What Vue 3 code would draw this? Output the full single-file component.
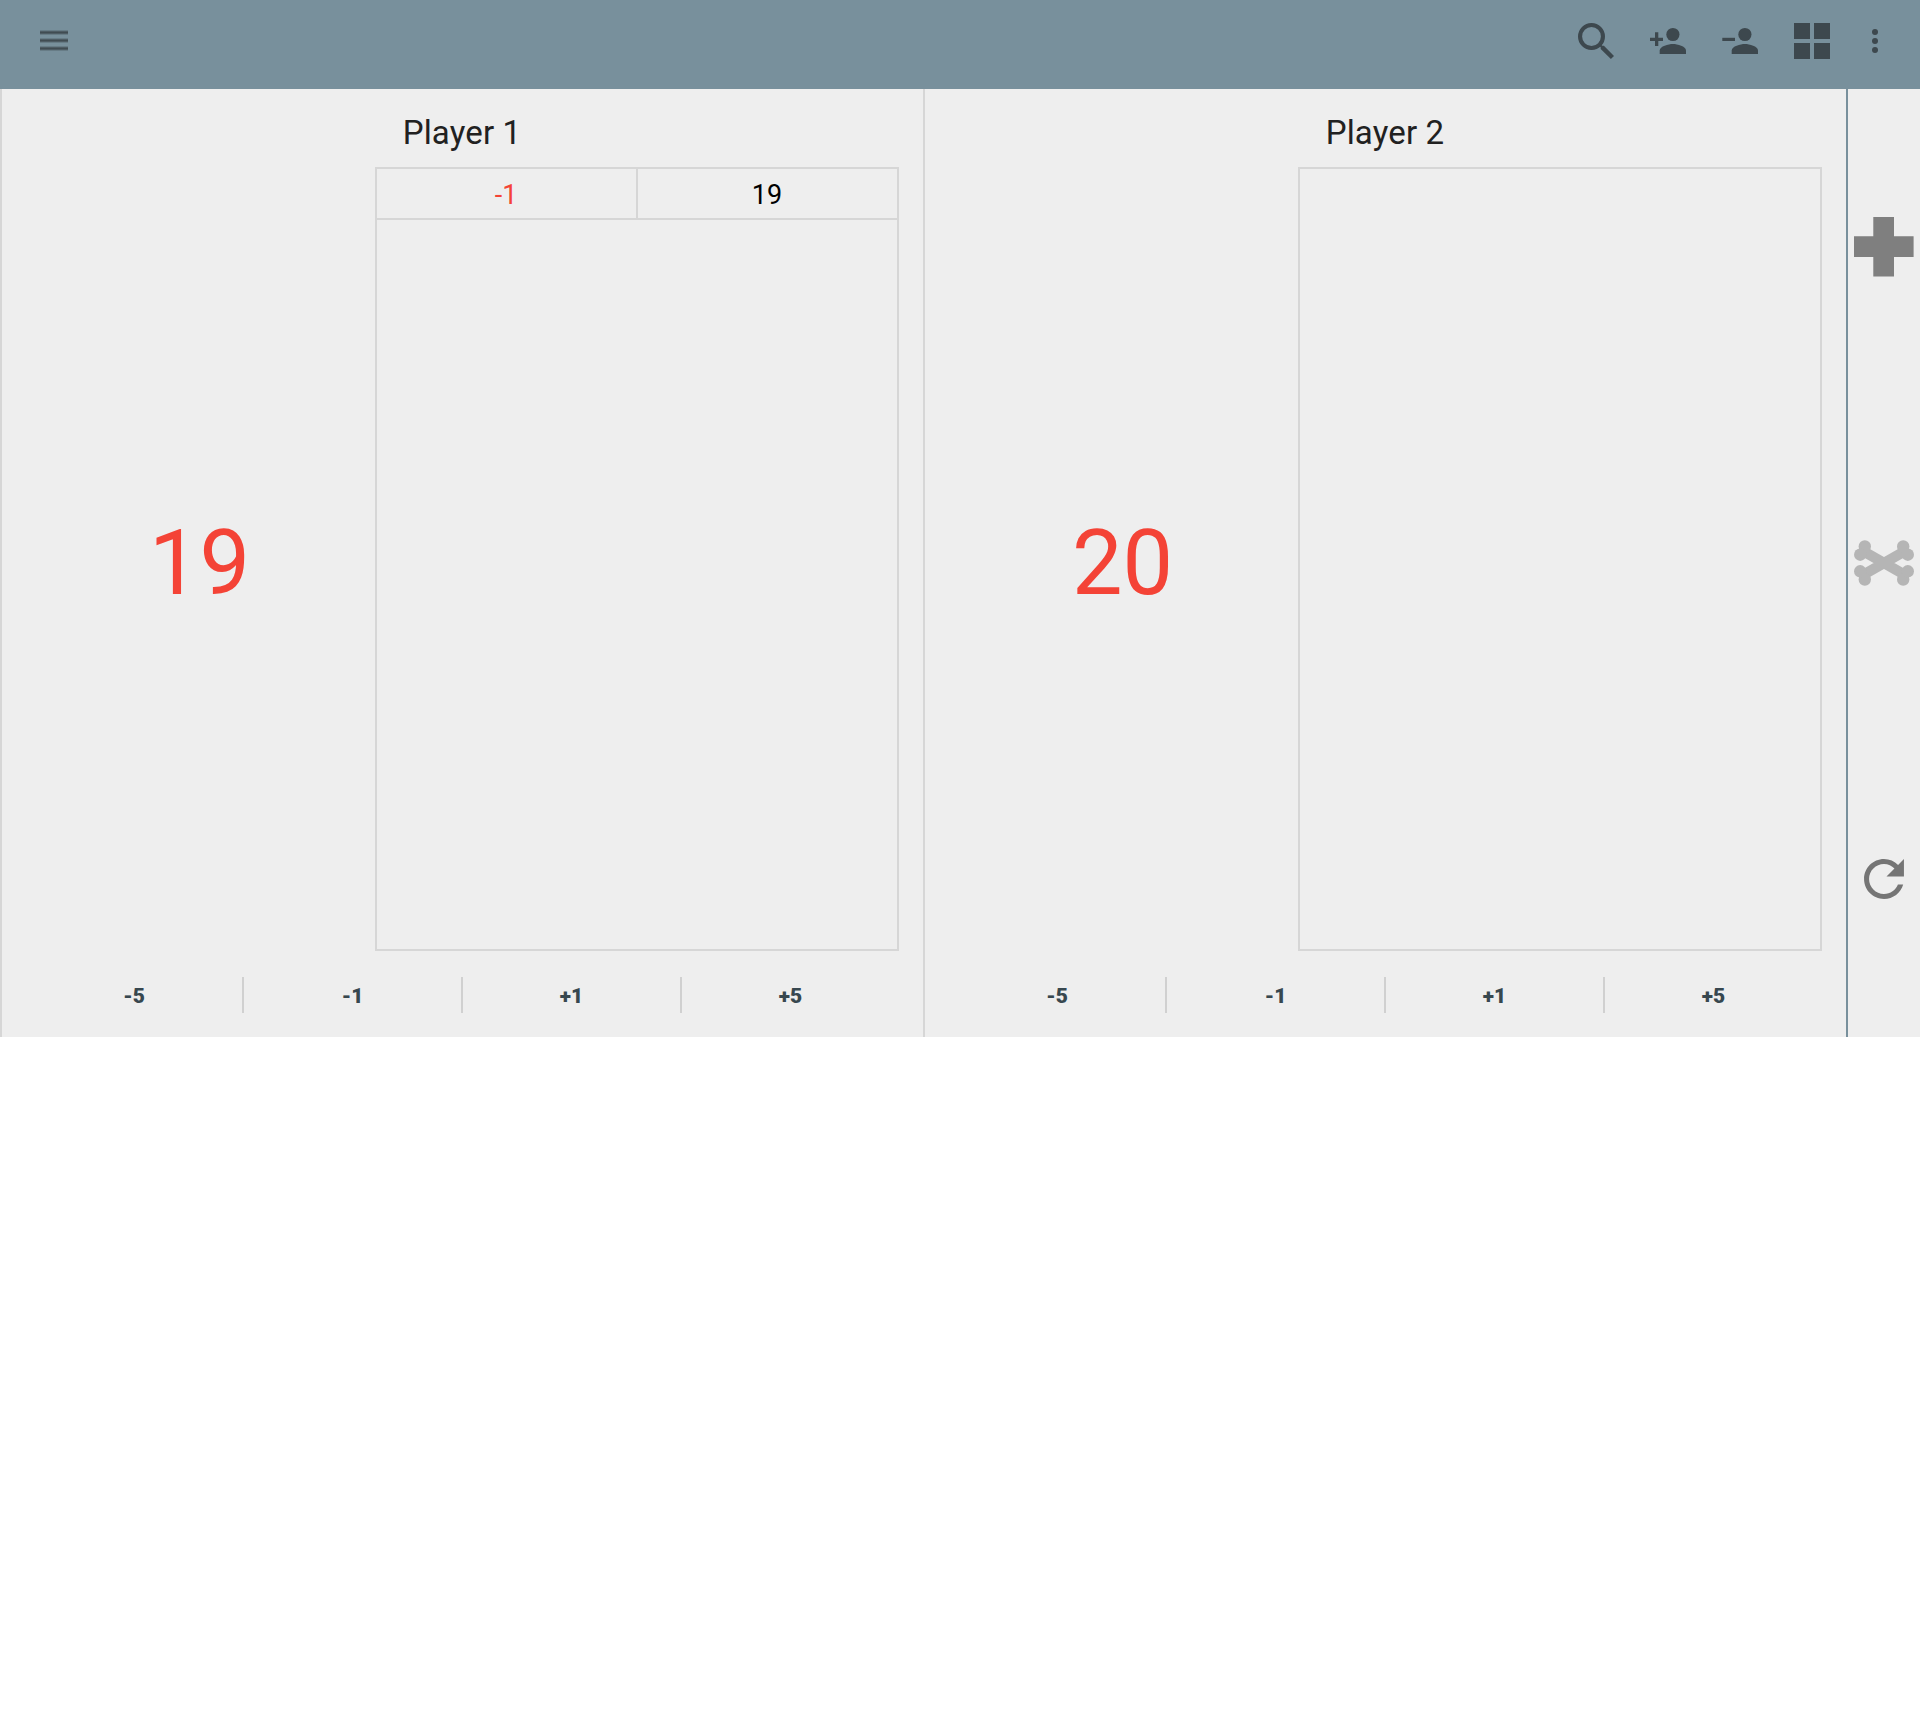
<script setup>
import { ref } from 'vue'

const players = ref([
  { name: 'Player 1', score: 19, history: [{ delta: '-1', total: 19 }] },
  { name: 'Player 2', score: 20, history: [] },
])
const steps = ['-5', '-1', '+1', '+5']
const body = 'M15.7 37v-3.4c0-4.4 8.8-6.6 13.2-6.6s13.1 2.2 13.1 6.6V37z'
</script>

<template>
  <div class="app">
    <header class="toolbar">
      <button class="icon" aria-label="Menu">
        <svg width="48" height="48" viewBox="0 0 48 48">
          <g v-for="y in [13, 21, 29]" :key="y">
            <rect x="10" :y="y" width="28" height="5" opacity=".28" />
            <rect x="10" :y="y + 1" width="28" height="3" opacity=".6" />
            <rect x="10" :y="y + 2" width="28" height="1" opacity=".8" />
          </g>
        </svg>
      </button>
      <div class="actions">
        <button class="icon" aria-label="Search">
          <svg width="48" height="48" viewBox="0 0 48 48">
            <circle cx="19.5" cy="19.5" r="11.45" fill="none" stroke="currentColor" stroke-width="4.1" />
            <path d="M28.6 27.1l1.7 1.6h1.6l10.1 10.2-3.1 3.1-10.2-10.1v-1.6l-1.6-1.7z" />
          </svg>
        </button>
        <button class="icon" aria-label="Add player">
          <svg width="48" height="48" viewBox="0 0 48 48">
            <circle cx="28.9" cy="17.5" r="6.6" />
            <path :d="body" />
            <path d="M6 20.8h5v-5.5h3.3v5.5H19V24h-4.7v5H11v-5H6z" />
          </svg>
        </button>
        <button class="icon" aria-label="Remove player">
          <svg width="48" height="48" viewBox="0 0 48 48">
            <circle cx="28.9" cy="17.5" r="6.6" />
            <path :d="body" />
            <path d="M6.3 20.8H19V24H6.3z" />
          </svg>
        </button>
        <button class="icon" aria-label="Grid">
          <svg width="48" height="48" viewBox="0 0 48 48">
            <path d="M6 6h16v16H6zM26 6h16v16H26zM6 26h16v16H6zM26 26h16v16H26z" />
          </svg>
        </button>
        <button class="icon more" aria-label="More">
          <svg width="48" height="48" viewBox="0 0 48 48">
            <circle cx="24" cy="15" r="3" />
            <circle cx="24" cy="24" r="3" />
            <circle cx="24" cy="33" r="3" />
          </svg>
        </button>
      </div>
    </header>

    <main class="board">
      <section v-for="p in players" :key="p.name" class="player">
        <h2 class="name">{{ p.name }}</h2>
        <div class="middle">
          <div class="score">{{ p.score }}</div>
          <div class="history">
            <div v-for="(h, i) in p.history" :key="i" class="entry">
              <span class="delta">{{ h.delta }}</span>
              <span class="total">{{ h.total }}</span>
            </div>
          </div>
        </div>
        <div class="steps">
          <button v-for="s in steps" :key="s" class="step">{{ s }}</button>
        </div>
      </section>

      <aside class="side">
        <button aria-label="Health">
          <svg width="60" height="60" viewBox="0 0 60 60" fill="#7f7f7f">
            <path d="M19.3 0H40v19.3h19.6V40H40v19.6H19.3V40H0V19.3h19.3z" />
          </svg>
        </button>
        <button aria-label="Poison">
          <svg width="60" height="60" viewBox="0 0 60 60" fill="#b5b5b5">
            <path d="M8.5 17.7L51.5 42.3M51.5 17.7L8.5 42.3" stroke="#b5b5b5" stroke-width="10.4" />
            <circle cx="10.8" cy="13.5" r="6.2" />
            <circle cx="6.2" cy="21.7" r="6.2" />
            <circle cx="49.2" cy="13.5" r="6.2" />
            <circle cx="53.8" cy="21.7" r="6.2" />
            <circle cx="10.8" cy="46.5" r="6.2" />
            <circle cx="6.2" cy="38.3" r="6.2" />
            <circle cx="49.2" cy="46.5" r="6.2" />
            <circle cx="53.8" cy="38.3" r="6.2" />
          </svg>
        </button>
        <button aria-label="Reset">
          <svg width="58" height="58" viewBox="0 0 512 512" fill="#757575">
            <path d="M256 388c-72.597 0-132-59.405-132-132 0-72.601 59.403-132 132-132 36.3 0 69.299 15.4 92.406 39.601L278 234h154V80l-51.698 51.702C348.406 99.798 304.406 80 256 80c-96.797 0-176 79.203-176 176s78.094 176 176 176c81.045 0 148.287-54.134 169.401-128H378.85c-18.745 49.561-67.138 84-122.85 84z" />
          </svg>
        </button>
      </aside>
    </main>
  </div>
</template>

<style>
body {
  margin: 0;
  background: #fff;
}
</style>

<style scoped>
.app {
  width: 1920px;
  font-family: Roboto, sans-serif;
}
button {
  display: flex;
  align-items: center;
  justify-content: center;
  margin: 0;
  padding: 0;
  border: 0;
  background: none;
  font-family: inherit;
}
svg {
  display: block;
  overflow: visible;
}
.toolbar {
  display: flex;
  justify-content: space-between;
  box-sizing: border-box;
  height: 89px;
  padding: 17px 21px 0 30px;
  background: #78909c;
}
.actions {
  display: flex;
  gap: 24px;
}
.icon {
  width: 48px;
  height: 48px;
  color: #3d484e;
}
.icon svg {
  fill: currentColor;
}
.more {
  margin-left: -9px;
}
.board {
  display: flex;
  height: 948px;
  background: #eee;
}
.player {
  display: flex;
  flex-direction: column;
  box-sizing: border-box;
  width: 923px;
  border-left: 2px solid #d6d6d6;
  padding: 0 22px 0 23px;
}
.name {
  height: 78px;
  margin: 0;
  padding: 6px 2px 0 0;
  box-sizing: border-box;
  font-size: 33px;
  font-weight: 400;
  line-height: 76px;
  letter-spacing: 0.15px;
  text-align: center;
  color: #212121;
}
.middle {
  display: flex;
  height: 784px;
}
.score {
  display: flex;
  align-items: center;
  justify-content: center;
  width: 350px;
  padding: 8px 1px 0 0;
  box-sizing: border-box;
  font-size: 90px;
  color: #f44336;
}
.history {
  box-sizing: border-box;
  width: 524px;
  border: 2px solid #d6d6d6;
}
.entry {
  display: flex;
  height: 49px;
  border-bottom: 2px solid #d6d6d6;
  font-size: 27px;
  line-height: 53px;
  text-align: center;
}
.entry span {
  box-sizing: border-box;
  width: 261px;
  padding-right: 1px;
}
.entry .delta {
  border-right: 2px solid #d6d6d6;
  color: #f44336;
}
.entry .total {
  width: 259px;
  color: #000;
}
.steps {
  display: flex;
  width: 876px;
  margin-top: 26px;
}
.step {
  box-sizing: border-box;
  width: 219px;
  height: 36px;
  padding: 2px 0 0;
  border-right: 2px solid #d0d0d0;
  font-size: 21px;
  font-weight: 900;
  color: #37474f;
}
.step:first-child {
  padding-left: 1px;
}
.step:last-child {
  border-right-color: transparent;
}
.side {
  display: flex;
  flex-direction: column;
  flex: 1;
  border-left: 2px solid #78909c;
}
.side button {
  flex: 1;
}
</style>
